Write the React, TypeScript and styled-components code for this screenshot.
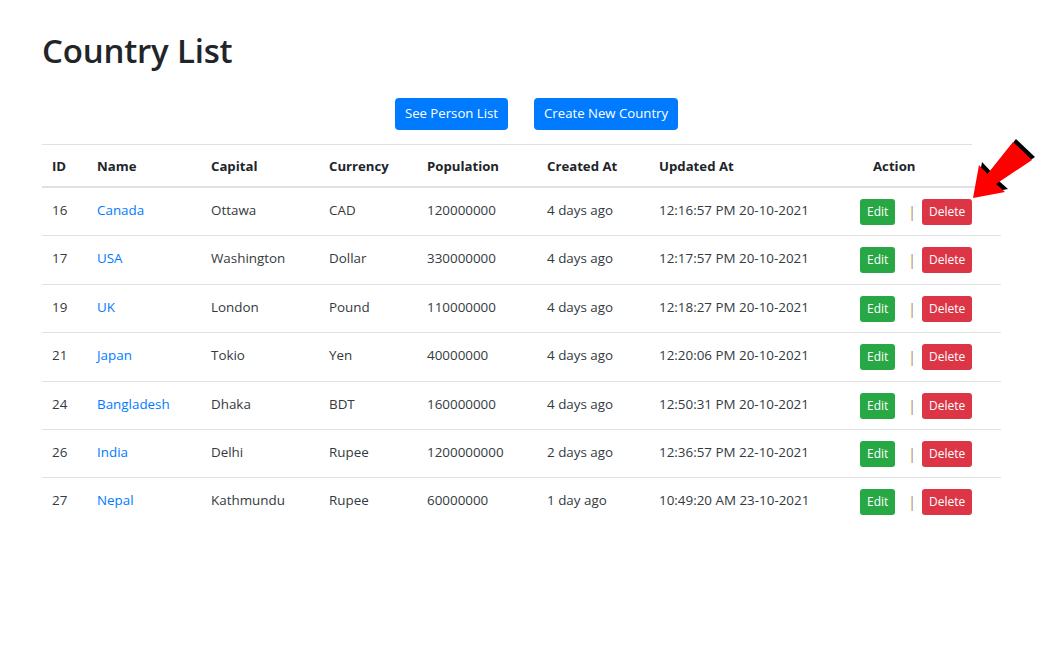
import {FunctionComponent} from 'react'
import styled, {createGlobalStyle} from 'styled-components'

const GlobalStyle = createGlobalStyle`
    body {
        margin: 0;
        background: #fff;
        font-family: "Open Sans", "Noto Sans", sans-serif;
        color: #212529;
    }
`

const Page = styled.div`
    position: relative;
    padding: 27px 27px 0 42px;
    width: 1060px;
    box-sizing: border-box;
`

const Title = styled.h1`
    margin: 0 0 23px;
    font-size: 33px;
    font-weight: 600;
    line-height: 48px;
    letter-spacing: -0.2px;
`

const Toolbar = styled.div`
    display: flex;
    justify-content: center;
    gap: 26px;
    margin-bottom: 14px;
    padding-right: 2px;
`

const Button = styled.button<{ $variant: 'primary' | 'success' | 'danger', $small?: boolean }>`
    border: none;
    border-radius: ${p => p.$small ? '3px' : '4px'};
    font-family: inherit;
    color: #fff;
    cursor: pointer;
    background: ${p => p.$variant === 'primary' ? '#007bff' : p.$variant === 'success' ? '#28a745' : '#dc3545'};
    font-size: ${p => p.$small ? '12px' : '13.2px'};
    height: ${p => p.$small ? '26px' : '32px'};
    padding: ${p => p.$small ? '0 7px' : '0 10px'};
    line-height: 1;
`

const TopRule = styled.div`
    width: 930px;
    height: 1px;
    background: #dee2e6;
`

const Table = styled.table`
    width: 959px;
    border-collapse: collapse;
    font-size: 13.4px;
`

const Th = styled.th<{ $pad?: number }>`
    text-align: left;
    font-weight: 700;
    font-size: 13.2px;
    padding: 9px 0 8px ${p => p.$pad ?? 10}px;
    line-height: 24px;
    border-bottom: 2px solid #dee2e6;
`

const Row = styled.tr`
    &:not(:last-child) td {
        border-bottom: 1px solid #dee2e6;
    }
`

const Td = styled.td`
    padding: 10px 0 13.4px 10px;
    line-height: 24px;
    vertical-align: top;
    color: #343a40;
`

const ActionCell = styled.td`
    padding: 11px 0 0 15px;
    vertical-align: top;
`

const Actions = styled.div`
    display: flex;
    align-items: center;
    gap: 10px;
`

const Sep = styled.span`
    color: #a88a62;
    font-size: 14px;
    line-height: 24px;
    margin: 0 -4px 0 3px;
`

const Link = styled.a`
    color: #007bff;
    text-decoration: none;
`

const Arrow = styled.svg`
    position: absolute;
    left: 958px;
    top: 133px;
`

interface Country {
    id: number
    name: string
    capital: string
    currency: string
    population: string
    created: string
    updated: string
}

const countries: Country[] = [
    {id: 16, name: 'Canada', capital: 'Ottawa', currency: 'CAD', population: '120000000', created: '4 days ago', updated: '12:16:57 PM 20-10-2021'},
    {id: 17, name: 'USA', capital: 'Washington', currency: 'Dollar', population: '330000000', created: '4 days ago', updated: '12:17:57 PM 20-10-2021'},
    {id: 19, name: 'UK', capital: 'London', currency: 'Pound', population: '110000000', created: '4 days ago', updated: '12:18:27 PM 20-10-2021'},
    {id: 21, name: 'Japan', capital: 'Tokio', currency: 'Yen', population: '40000000', created: '4 days ago', updated: '12:20:06 PM 20-10-2021'},
    {id: 24, name: 'Bangladesh', capital: 'Dhaka', currency: 'BDT', population: '160000000', created: '4 days ago', updated: '12:50:31 PM 20-10-2021'},
    {id: 26, name: 'India', capital: 'Delhi', currency: 'Rupee', population: '1200000000', created: '2 days ago', updated: '12:36:57 PM 22-10-2021'},
    {id: 27, name: 'Nepal', capital: 'Kathmundu', currency: 'Rupee', population: '60000000', created: '1 day ago', updated: '10:49:20 AM 23-10-2021'},
]

// arrow pointing down-left, tip at the Delete button corner
const arrowPoints = '15,65 21,32 29.5,41 55,9 74,27 38,51 47,59'

const App: FunctionComponent = () => {
    return (
        <Page>
            <GlobalStyle/>
            <Title>Country List</Title>
            <Toolbar>
                <Button $variant="primary">See Person List</Button>
                <Button $variant="primary">Create New Country</Button>
            </Toolbar>
            <TopRule/>
            <Table>
                <colgroup>
                    <col style={{width: 45}}/>
                    <col style={{width: 114}}/>
                    <col style={{width: 118}}/>
                    <col style={{width: 98}}/>
                    <col style={{width: 120}}/>
                    <col style={{width: 112}}/>
                    <col style={{width: 196}}/>
                    <col/>
                </colgroup>
                <thead>
                <tr>
                    <Th>ID</Th>
                    <Th>Name</Th>
                    <Th>Capital</Th>
                    <Th>Currency</Th>
                    <Th>Population</Th>
                    <Th>Created At</Th>
                    <Th>Updated At</Th>
                    <Th $pad={28}>Action</Th>
                </tr>
                </thead>
                <tbody>
                {countries.map(c => (
                    <Row key={c.id}>
                        <Td>{c.id}</Td>
                        <Td><Link href="#">{c.name}</Link></Td>
                        <Td>{c.capital}</Td>
                        <Td>{c.currency}</Td>
                        <Td>{c.population}</Td>
                        <Td>{c.created}</Td>
                        <Td>{c.updated}</Td>
                        <ActionCell>
                            <Actions>
                                <Button $variant="success" $small>Edit</Button>
                                <Sep>|</Sep>
                                <Button $variant="danger" $small>Delete</Button>
                            </Actions>
                        </ActionCell>
                    </Row>
                ))}
                </tbody>
            </Table>
            <Arrow width="90" height="80" viewBox="0 0 90 80">
                <polygon points={arrowPoints} fill="#000" transform="translate(3,-3)"/>
                <polygon points={arrowPoints} fill="#ff0000"/>
            </Arrow>
        </Page>
    )
}

export default App
